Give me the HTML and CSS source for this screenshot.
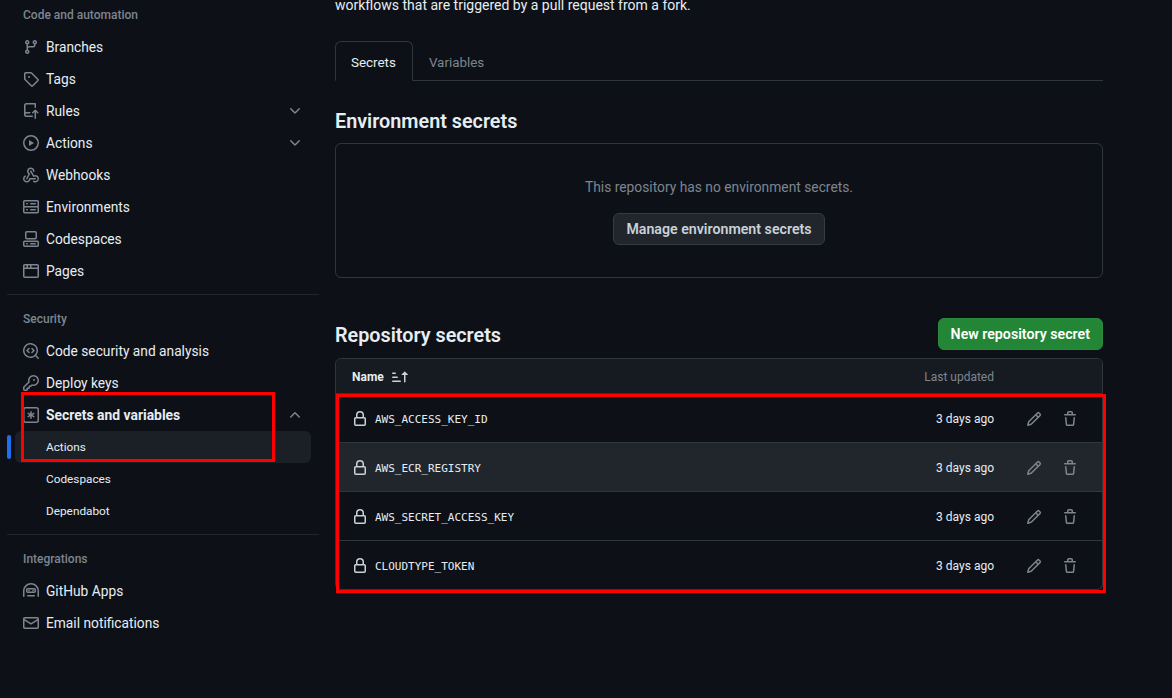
FILE: index.html
```html
<!DOCTYPE html>
<html lang="en">
<head>
<meta charset="utf-8">
<title>Actions secrets and variables</title>
<link rel="stylesheet" href="styles.css">
</head>
<body>
<svg class="defs" aria-hidden="true">
  <symbol id="i-branch" viewBox="0 0 16 16"><path d="M9.5 3.25a2.25 2.25 0 1 1 3 2.122V6A2.5 2.5 0 0 1 10 8.5H6a1 1 0 0 0-1 1v1.128a2.251 2.251 0 1 1-1.5 0V5.372a2.25 2.25 0 1 1 1.5 0v1.836A2.493 2.493 0 0 1 6 7h4a1 1 0 0 0 1-1v-.628A2.25 2.25 0 0 1 9.5 3.25Zm-6 0a.75.75 0 1 0 1.5 0 .75.75 0 0 0-1.5 0Zm8.25-.75a.75.75 0 1 0 0 1.5.75.75 0 0 0 0-1.5ZM4.25 12a.75.75 0 1 0 0 1.5.75.75 0 0 0 0-1.5Z"/></symbol>
  <symbol id="i-tag" viewBox="0 0 16 16"><path d="M1 7.775V2.75C1 1.784 1.784 1 2.75 1h5.025c.464 0 .91.184 1.238.513l6.25 6.25a1.75 1.75 0 0 1 0 2.474l-5.026 5.026a1.75 1.75 0 0 1-2.474 0l-6.25-6.25A1.752 1.752 0 0 1 1 7.775Zm1.5 0c0 .066.026.13.073.177l6.25 6.25a.25.25 0 0 0 .354 0l5.025-5.025a.25.25 0 0 0 0-.354l-6.25-6.25a.25.25 0 0 0-.177-.073H2.75a.25.25 0 0 0-.25.25ZM6 5a1 1 0 1 1 0 2 1 1 0 0 1 0-2Z"/></symbol>
  <symbol id="i-rules" viewBox="0 0 16 16"><path d="M1 2.5A2.5 2.5 0 0 1 3.5 0h8.75a.75.75 0 0 1 .75.75v3.5a.75.75 0 0 1-1.5 0V1.5h-8a1 1 0 0 0-1 1v6.708A2.493 2.493 0 0 1 3.5 9h3.25a.75.75 0 0 1 0 1.5H3.5a1 1 0 0 0 0 2h5.75a.75.75 0 0 1 0 1.5H3.5A2.5 2.5 0 0 1 1 11.5Zm13.23 7.79h-.001l-1.224-1.224v6.184a.75.75 0 0 1-1.5 0V9.066L10.28 10.29a.75.75 0 0 1-1.06-1.061l2.505-2.504a.75.75 0 0 1 1.06 0L15.29 9.23a.751.751 0 0 1-.018 1.042.751.751 0 0 1-1.042.018Z"/></symbol>
  <symbol id="i-play" viewBox="0 0 16 16"><path d="M8 0a8 8 0 1 1 0 16A8 8 0 0 1 8 0ZM1.5 8a6.5 6.5 0 1 0 13 0 6.5 6.5 0 0 0-13 0Zm4.879-2.773 4.264 2.559a.25.25 0 0 1 0 .428l-4.264 2.559A.25.25 0 0 1 6 10.559V5.442a.25.25 0 0 1 .379-.215Z"/></symbol>
  <symbol id="i-webhook" viewBox="0 0 16 16"><path d="M5.5 4.25a2.25 2.25 0 0 1 4.5 0 .75.75 0 0 0 1.5 0 3.75 3.75 0 1 0-6.14 2.889l-2.272 4.258a.75.75 0 0 0 1.324.706L7 7.25a.75.75 0 0 0-.309-1.015A2.25 2.25 0 0 1 5.5 4.25Z"/><path d="M7.364 3.607a.75.75 0 0 1 1.03.257l2.608 4.349a3.75 3.75 0 1 1-.628 6.785.75.75 0 0 1 .752-1.299 2.25 2.25 0 1 0-.033-3.88.75.75 0 0 1-1.03-.256L7.107 4.636a.75.75 0 0 1 .257-1.03Z"/><path d="M2.9 8.776A.75.75 0 0 1 2.625 9.8 2.25 2.25 0 1 0 6 11.75a.75.75 0 0 1 .75-.751h5.5a.75.75 0 0 1 0 1.5H7.425a3.751 3.751 0 1 1-5.55-3.998.75.75 0 0 1 1.024.274Z"/></symbol>
  <symbol id="i-server" viewBox="0 0 16 16"><path d="M1.75 1h12.5c.966 0 1.75.784 1.75 1.75v4c0 .372-.116.717-.314 1 .198.283.314.628.314 1v4a1.75 1.75 0 0 1-1.75 1.75H1.75A1.75 1.75 0 0 1 0 12.75v-4c0-.372.116-.717.314-1a1.739 1.739 0 0 1-.314-1v-4C0 1.784.784 1 1.75 1ZM1.5 2.75v4c0 .138.112.25.25.25h12.5a.25.25 0 0 0 .25-.25v-4a.25.25 0 0 0-.25-.25H1.75a.25.25 0 0 0-.25.25Zm.25 5.75a.25.25 0 0 0-.25.25v4c0 .138.112.25.25.25h12.5a.25.25 0 0 0 .25-.25v-4a.25.25 0 0 0-.25-.25ZM7 4.75A.75.75 0 0 1 7.75 4h4.5a.75.75 0 0 1 0 1.5h-4.5A.75.75 0 0 1 7 4.75ZM7.75 10h4.5a.75.75 0 0 1 0 1.5h-4.5a.75.75 0 0 1 0-1.5ZM3 4.75A.75.75 0 0 1 3.75 4h.5a.75.75 0 0 1 0 1.5h-.5A.75.75 0 0 1 3 4.75ZM3.75 10h.5a.75.75 0 0 1 0 1.5h-.5a.75.75 0 0 1 0-1.5Z"/></symbol>
  <symbol id="i-codespaces" viewBox="0 0 16 16"><path d="M0 11.25c0-.966.784-1.75 1.75-1.75h12.5c.966 0 1.75.784 1.75 1.75v3A1.75 1.75 0 0 1 14.25 16H1.75A1.75 1.75 0 0 1 0 14.25Zm2-9.5C2 .784 2.784 0 3.75 0h8.5C13.216 0 14 .784 14 1.75v5a1.75 1.75 0 0 1-1.75 1.75h-8.5A1.75 1.75 0 0 1 2 6.75Zm1.75-.25a.25.25 0 0 0-.25.25v5c0 .138.112.25.25.25h8.5a.25.25 0 0 0 .25-.25v-5a.25.25 0 0 0-.25-.25Zm-2 9.5a.25.25 0 0 0-.25.25v3c0 .138.112.25.25.25h12.5a.25.25 0 0 0 .25-.25v-3a.25.25 0 0 0-.25-.25Z"/><path d="M7 12.75a.75.75 0 0 1 .75-.75h4.5a.75.75 0 0 1 0 1.5h-4.5a.75.75 0 0 1-.75-.75Zm-4 0a.75.75 0 0 1 .75-.75h.5a.75.75 0 0 1 0 1.5h-.5a.75.75 0 0 1-.75-.75Z"/></symbol>
  <symbol id="i-browser" viewBox="0 0 16 16"><path d="M0 2.75C0 1.784.784 1 1.75 1h12.5c.966 0 1.75.784 1.75 1.75v10.5A1.75 1.75 0 0 1 14.25 15H1.75A1.75 1.75 0 0 1 0 13.25ZM14.5 6h-13v7.25c0 .138.112.25.25.25h12.5a.25.25 0 0 0 .25-.25Zm-6-3.5v2h6V2.75a.25.25 0 0 0-.25-.25ZM5 2.5v2h2v-2Zm-3.25 0a.25.25 0 0 0-.25.25V4.5h2v-2Z"/></symbol>
  <symbol id="i-scan" viewBox="0 0 16 16"><path d="M8.47 4.97a.75.75 0 0 0 0 1.06L9.94 7.5 8.47 8.97a.75.75 0 1 0 1.06 1.06l2-2a.75.75 0 0 0 0-1.06l-2-2a.75.75 0 0 0-1.06 0ZM6.53 6.03a.75.75 0 0 0-1.06-1.06l-2 2a.75.75 0 0 0 0 1.06l2 2a.75.75 0 1 0 1.06-1.06L5.06 7.5l1.47-1.47Z"/><path d="M12.246 13.307a7.501 7.501 0 1 1 1.06-1.06l2.474 2.473a.749.749 0 0 1-.326 1.275.749.749 0 0 1-.734-.215ZM1.5 7.5a6.002 6.002 0 0 0 3.608 5.504 6.002 6.002 0 0 0 6.486-1.117.748.748 0 0 1 .292-.293A6 6 0 1 0 1.5 7.5Z"/></symbol>
  <symbol id="i-key" viewBox="0 0 16 16"><path d="M10.5 0a5.499 5.499 0 1 1-1.288 10.848l-.932.932a.749.749 0 0 1-.53.22H7v.75a.749.749 0 0 1-.22.53l-.5.5a.749.749 0 0 1-.53.22H5v.75a.749.749 0 0 1-.22.53l-.5.5a.749.749 0 0 1-.53.22h-2A1.75 1.75 0 0 1 0 14.25v-2c0-.199.079-.389.22-.53l4.932-4.932A5.5 5.5 0 0 1 10.5 0Zm-4 5.5c-.001.431.069.86.205 1.269a.75.75 0 0 1-.181.768L1.5 12.56v1.69c0 .138.112.25.25.25h1.69l.06-.06v-1.19a.75.75 0 0 1 .75-.75h1.19l.06-.06v-1.19a.75.75 0 0 1 .75-.75h1.19l1.023-1.025a.75.75 0 0 1 .768-.18A4 4 0 1 0 6.5 5.5ZM11 6a1 1 0 1 1 0-2 1 1 0 0 1 0 2Z"/></symbol>
  <symbol id="i-asterisk" viewBox="0 0 16 16"><path d="M0 2.75A2.75 2.75 0 0 1 2.75 0h10.5A2.75 2.75 0 0 1 16 2.75v10.5A2.75 2.75 0 0 1 13.25 16H2.75A2.75 2.75 0 0 1 0 13.25ZM2.75 1.5c-.69 0-1.25.56-1.25 1.25v10.5c0 .69.56 1.25 1.25 1.25h10.5c.69 0 1.25-.56 1.25-1.25V2.75c0-.69-.56-1.25-1.25-1.25Z"/><path d="M8 4a.75.75 0 0 1 .75.75V6.7l1.69-.975a.75.75 0 0 1 .75 1.3L9.5 8l1.69.976a.75.75 0 0 1-.75 1.298L8.75 9.3v1.95a.75.75 0 0 1-1.5 0V9.3l-1.69.975a.75.75 0 0 1-.75-1.3L6.5 8l-1.69-.975a.75.75 0 0 1 .75-1.3l1.69.976V4.75A.75.75 0 0 1 8 4Z"/></symbol>
  <symbol id="i-apps" viewBox="0 0 16 16"><path fill-rule="evenodd" d="M0 8a8 8 0 0 1 16 0v5.25a.75.75 0 0 1-1.5 0V8a6.5 6.5 0 1 0-13 0v5.25a.75.75 0 0 1-1.5 0ZM3 6.75C3 5.784 3.784 5 4.75 5h6.5c.966 0 1.75.784 1.75 1.75v1.5A1.75 1.75 0 0 1 11.25 10h-6.5A1.75 1.75 0 0 1 3 8.25Zm1.75-.25a.25.25 0 0 0-.25.25v1.5c0 .138.112.25.25.25h6.5a.25.25 0 0 0 .25-.25v-1.5a.25.25 0 0 0-.25-.25Z"/><path d="M6 6.75a.75.75 0 0 1 .75.75v.25a.75.75 0 0 1-1.5 0V7.5A.75.75 0 0 1 6 6.75Zm4 0a.75.75 0 0 1 .75.75v.25a.75.75 0 0 1-1.5 0V7.5a.75.75 0 0 1 .75-.75ZM4.75 12h6.5a.75.75 0 0 1 0 1.5h-6.5a.75.75 0 0 1 0-1.5Z"/></symbol>
  <symbol id="i-mail" viewBox="0 0 16 16"><path d="M1.75 2h12.5c.966 0 1.75.784 1.75 1.75v8.5A1.75 1.75 0 0 1 14.25 14H1.75A1.75 1.75 0 0 1 0 12.25v-8.5C0 2.784.784 2 1.75 2ZM1.5 12.251c0 .138.112.25.25.25h12.5a.25.25 0 0 0 .25-.25V5.809L8.38 9.397a.75.75 0 0 1-.76 0L1.5 5.809v6.442Zm13-8.181v-.32a.25.25 0 0 0-.25-.25H1.75a.25.25 0 0 0-.25.25v.32L8 7.88Z"/></symbol>
  <symbol id="i-lock" viewBox="0 0 16 16"><path d="M4 4a4 4 0 0 1 8 0v2h.25c.966 0 1.75.784 1.75 1.75v5.5A1.75 1.75 0 0 1 12.25 15h-8.5A1.75 1.75 0 0 1 2 13.25v-5.5C2 6.784 2.784 6 3.75 6H4Zm8.25 3.5h-8.5a.25.25 0 0 0-.25.25v5.5c0 .138.112.25.25.25h8.5a.25.25 0 0 0 .25-.25v-5.5a.25.25 0 0 0-.25-.25ZM10.5 6V4a2.5 2.5 0 1 0-5 0v2Z"/></symbol>
  <symbol id="i-pencil" viewBox="0 0 16 16"><path d="M11.013 1.427a1.75 1.75 0 0 1 2.474 0l1.086 1.086a1.75 1.75 0 0 1 0 2.474l-8.61 8.61c-.21.21-.47.364-.756.445l-3.251.93a.75.75 0 0 1-.927-.928l.929-3.25c.081-.286.235-.547.445-.758l8.61-8.61Zm.176 4.823L9.75 4.81l-6.286 6.287a.253.253 0 0 0-.064.108l-.558 1.953 1.953-.558a.253.253 0 0 0 .108-.064Zm1.238-3.763a.25.25 0 0 0-.354 0L10.811 3.75l1.439 1.44 1.263-1.263a.25.25 0 0 0 0-.354Z"/></symbol>
  <symbol id="i-trash" viewBox="0 0 16 16"><path d="M11 1.75V3h2.25a.75.75 0 0 1 0 1.5H2.75a.75.75 0 0 1 0-1.5H5V1.75C5 .784 5.784 0 6.75 0h2.5C10.216 0 11 .784 11 1.75ZM4.496 6.675l.66 6.6a.25.25 0 0 0 .249.225h5.19a.25.25 0 0 0 .249-.225l.66-6.6a.75.75 0 0 1 1.492.149l-.66 6.6A1.748 1.748 0 0 1 10.595 15h-5.19a1.75 1.75 0 0 1-1.741-1.575l-.66-6.6a.75.75 0 1 1 1.492-.15ZM6.5 1.75V3h3V1.75a.25.25 0 0 0-.25-.25h-2.5a.25.25 0 0 0-.25.25Z"/></symbol>
  <symbol id="i-down" viewBox="0 0 16 16"><path d="M12.78 5.22a.749.749 0 0 1 0 1.06l-4.25 4.25a.749.749 0 0 1-1.06 0L3.22 6.28a.749.749 0 1 1 1.06-1.06L8 8.939l3.72-3.719a.749.749 0 0 1 1.06 0Z"/></symbol>
  <symbol id="i-up" viewBox="0 0 16 16"><path d="M3.22 10.53a.749.749 0 0 1 0-1.06l4.25-4.25a.749.749 0 0 1 1.06 0l4.25 4.25a.749.749 0 1 1-1.06 1.06L8 6.811 4.28 10.53a.749.749 0 0 1-1.06 0Z"/></symbol>
  <symbol id="i-sort" viewBox="0 0 16 16"><path d="m12.927 2.573 3 3A.25.25 0 0 1 15.75 6H13.5v6.75a.75.75 0 0 1-1.5 0V6H9.75a.25.25 0 0 1-.177-.427l3-3a.25.25 0 0 1 .354 0ZM0 12.25a.75.75 0 0 1 .75-.75h7.5a.75.75 0 0 1 0 1.5H.75a.75.75 0 0 1-.75-.75Zm0-4a.75.75 0 0 1 .75-.75h4.5a.75.75 0 0 1 0 1.5H.75A.75.75 0 0 1 0 8.25Zm0-4a.75.75 0 0 1 .75-.75h2.5a.75.75 0 0 1 0 1.5H.75A.75.75 0 0 1 0 4.25Z"/></symbol>
</svg>

<div class="page">
  <nav class="sidebar">
    <h2 class="nav-heading first">Code and automation</h2>
    <a class="nav-item"><svg class="icon"><use href="#i-branch"/></svg><span>Branches</span></a>
    <a class="nav-item"><svg class="icon"><use href="#i-tag"/></svg><span>Tags</span></a>
    <a class="nav-item"><svg class="icon"><use href="#i-rules"/></svg><span>Rules</span><svg class="icon chevron"><use href="#i-down"/></svg></a>
    <a class="nav-item"><svg class="icon"><use href="#i-play"/></svg><span>Actions</span><svg class="icon chevron"><use href="#i-down"/></svg></a>
    <a class="nav-item"><svg class="icon"><use href="#i-webhook"/></svg><span>Webhooks</span></a>
    <a class="nav-item"><svg class="icon"><use href="#i-server"/></svg><span>Environments</span></a>
    <a class="nav-item"><svg class="icon"><use href="#i-codespaces"/></svg><span>Codespaces</span></a>
    <a class="nav-item"><svg class="icon"><use href="#i-browser"/></svg><span>Pages</span></a>
    <hr class="nav-divider">
    <h2 class="nav-heading">Security</h2>
    <a class="nav-item"><svg class="icon"><use href="#i-scan"/></svg><span>Code security and analysis</span></a>
    <a class="nav-item"><svg class="icon"><use href="#i-key"/></svg><span>Deploy keys</span></a>
    <a class="nav-item strong"><svg class="icon"><use href="#i-asterisk"/></svg><span>Secrets and variables</span><svg class="icon chevron"><use href="#i-up"/></svg></a>
    <a class="nav-item sub current">Actions</a>
    <a class="nav-item sub">Codespaces</a>
    <a class="nav-item sub">Dependabot</a>
    <hr class="nav-divider">
    <h2 class="nav-heading">Integrations</h2>
    <a class="nav-item"><svg class="icon"><use href="#i-apps"/></svg><span>GitHub Apps</span></a>
    <a class="nav-item"><svg class="icon"><use href="#i-mail"/></svg><span>Email notifications</span></a>
  </nav>

  <main class="content">
    <p class="intro">workflows that are triggered by a pull request from a fork.</p>
    <div class="tabs">
      <a class="tab active">Secrets</a>
      <a class="tab">Variables</a>
    </div>

    <h3 class="section-title env-title">Environment secrets</h3>
    <div class="blank">
      <p class="blank-text">This repository has no environment secrets.</p>
      <a class="btn">Manage environment secrets</a>
    </div>

    <div class="section-head">
      <h3 class="section-title">Repository secrets</h3>
      <a class="btn primary">New repository secret</a>
    </div>

    <div class="table">
      <div class="row head">
        <span class="name-head">Name <svg class="icon sort"><use href="#i-sort"/></svg></span>
        <span class="updated muted">Last updated</span>
      </div>
      <div class="row">
        <svg class="icon lock"><use href="#i-lock"/></svg><code class="secret">AWS_ACCESS_KEY_ID</code>
        <span class="updated">3 days ago</span>
        <span class="actions"><svg class="icon"><use href="#i-pencil"/></svg><svg class="icon"><use href="#i-trash"/></svg></span>
      </div>
      <div class="row hover">
        <svg class="icon lock"><use href="#i-lock"/></svg><code class="secret">AWS_ECR_REGISTRY</code>
        <span class="updated">3 days ago</span>
        <span class="actions"><svg class="icon"><use href="#i-pencil"/></svg><svg class="icon"><use href="#i-trash"/></svg></span>
      </div>
      <div class="row">
        <svg class="icon lock"><use href="#i-lock"/></svg><code class="secret">AWS_SECRET_ACCESS_KEY</code>
        <span class="updated">3 days ago</span>
        <span class="actions"><svg class="icon"><use href="#i-pencil"/></svg><svg class="icon"><use href="#i-trash"/></svg></span>
      </div>
      <div class="row">
        <svg class="icon lock"><use href="#i-lock"/></svg><code class="secret">CLOUDTYPE_TOKEN</code>
        <span class="updated">3 days ago</span>
        <span class="actions"><svg class="icon"><use href="#i-pencil"/></svg><svg class="icon"><use href="#i-trash"/></svg></span>
      </div>
    </div>
  </main>
</div>

<div class="mark mark-nav"></div>
<div class="mark mark-table"></div>
</body>
</html>
```

FILE: styles.css
```css
* { box-sizing: border-box; }
html, body { margin: 0; height: 100%; }
body {
  background: #0d1117;
  color: #e6edf3;
  font-family: "Roboto", "Noto Sans", sans-serif;
  font-size: 14px;
  overflow: hidden;
  position: relative;
}
.defs { width: 0; height: 0; display: block; }
.icon { width: 16px; height: 16px; fill: #7d8590; flex: none; display: block; }

.page { display: flex; align-items: flex-start; padding-left: 7px; }

.sidebar { width: 312px; flex: none; display: flex; flex-direction: column; }
.nav-heading {
  margin: 14px 0 6px;
  padding: 0 16px;
  height: 20px;
  line-height: 20px;
  font-size: 12px;
  font-weight: 500;
  color: #7d8590;
}
.nav-heading.first { margin-top: 5px; }
.nav-divider { width: 100%; height: 1px; border: 0; background: #21262d; margin: 7px 0 0; }
.nav-item {
  display: flex;
  align-items: center;
  gap: 7px;
  height: 32px;
  margin: 0 8px;
  padding: 0 8px;
  border-radius: 6px;
  color: #e6edf3;
  font-size: 13.75px;
  position: relative;
}
.nav-item .chevron { margin-left: auto; }
.nav-item.strong { font-weight: 700; font-size: 13.9px; }
.nav-item.sub { padding-left: 31px; font-size: 11.8px; }
.nav-item.current { background: #1b2026; }
.nav-item.current::before {
  content: "";
  position: absolute;
  left: -8px;
  top: 4px;
  width: 4px;
  height: 24px;
  border-radius: 6px;
  background: #1f6feb;
}

.content { width: 768px; margin-left: 16px; flex: none; margin-top: -5px; }
.intro { margin: 0; height: 20px; line-height: 20px; font-size: 14px; }
.tabs { display: flex; height: 40px; margin-top: 26px; border-bottom: 1px solid #30363d; }
.tab {
  display: flex;
  align-items: center;
  padding: 2px 16px 0;
  height: 40px;
  color: #7d8590;
  font-size: 13.4px;
}
.tab.active {
  color: #e6edf3;
  border: 1px solid #30363d;
  border-bottom-color: #0d1117;
  border-radius: 6px 6px 0 0;
  padding: 2px 16px 0 15px;
}

.section-title { margin: 0; font-size: 19.8px; line-height: 30px; font-weight: 600; padding-top: 2px; margin-bottom: -2px; }
.env-title { margin-top: 24px; }
.blank {
  height: 135px;
  margin-top: 8px;
  border: 1px solid #30363d;
  border-radius: 6px;
  display: flex;
  flex-direction: column;
  align-items: center;
  padding-top: 33px;
}
.blank-text { margin: 0 0 16px; line-height: 20px; color: #7d8590; font-size: 13.8px; }
.btn {
  display: inline-flex;
  align-items: center;
  justify-content: center;
  height: 32px;
  padding: 0 12px;
  font-size: 14.2px;
  font-weight: 600;
  line-height: 20px;
  color: #c9d1d9;
  background: #21262d;
  border: 1px solid #363b42;
  border-radius: 6px;
}
.btn.primary { background: #238636; border-color: #2b8a3e; color: #fff; }

.section-head {
  display: flex;
  align-items: center;
  justify-content: space-between;
  margin-top: 40px;
}
.table { margin-top: 8px; border: 1px solid #30363d; border-radius: 6px; }
.row {
  display: flex;
  align-items: center;
  height: 49px;
  padding: 2px 16px 0;
  border-bottom: 1px solid #30363d;
}
.row:last-child { border-bottom: 0; height: 48px; }
.row.head {
  height: 35px;
  background: #161b22;
  border-radius: 6px 6px 0 0;
}
.row.hover { background: #21262d; }
.name-head { display: flex; align-items: center; gap: 8px; font-size: 12px; font-weight: 700; color: #e6edf3; }
.sort { width: 16px; height: 16px; fill: #c9d1d9; }
.lock { fill: #c9d1d9; margin-right: 7px; }
.secret { font-family: "DejaVu Sans Mono", "Liberation Mono", monospace; font-size: 11px; color: #e6edf3; }
.updated { margin-left: auto; font-size: 12px; color: #e6edf3; }
.updated.muted { color: #7d8590; margin-right: 92px; }
.actions { display: flex; gap: 20px; margin-left: 32px; margin-right: 8px; }

.mark { position: absolute; border: 3px solid #f00; pointer-events: none; }
.mark-nav { left: 21px; top: 392px; width: 254px; height: 70px; }
.mark-table { left: 336px; top: 394px; width: 770px; height: 199px; }
```
